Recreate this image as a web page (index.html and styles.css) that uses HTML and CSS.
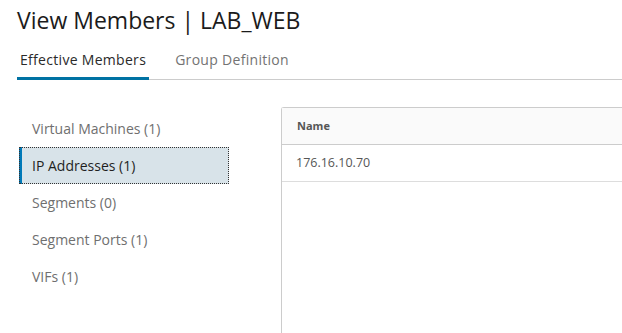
FILE: index.html
```html
<!DOCTYPE html>
<html>
<head>
<meta charset="utf-8">
<link rel="stylesheet" href="styles.css">
</head>
<body>
<div class="page">
  <h1 class="title">View Members | LAB_WEB</h1>
  <div class="tabs">
    <div class="tab active">Effective Members</div>
    <div class="tab">Group Definition</div>
  </div>
  <div class="content">
    <ul class="nav">
      <li class="nav-item">Virtual Machines (1)</li>
      <li class="nav-item selected">IP Addresses (1)</li>
      <li class="nav-item">Segments (0)</li>
      <li class="nav-item">Segment Ports (1)</li>
      <li class="nav-item">VIFs (1)</li>
    </ul>
    <div class="grid">
      <div class="grid-head">Name</div>
      <div class="grid-row">176.16.10.70</div>
    </div>
  </div>
</div>
</body>
</html>
```
FILE: styles.css
```css
html, body { margin: 0; padding: 0; background: #fff; }
body { font-family: "Open Sans", sans-serif; color: #313131; overflow: hidden; }
.page { padding: 0 0 0 17px; width: 605px; height: 333px; }
.title { margin: 0; padding-top: 4px; font-size: 23px; font-weight: 400; color: #1b1b1b; line-height: 32px; }
.tabs { display: flex; margin-top: 12px; border-bottom: 1px solid #cccccc; height: 32px; box-sizing: border-box; }
.tab { font-size: 14px; letter-spacing: 0.3px; color: #737373; padding: 0 3px; line-height: 24px; margin-right: 23px; }
.tab.active { color: #2a2a2a; border-bottom: 3px solid #0072a3; margin-bottom: -1px; padding-bottom: 2px; }
.content { display: flex; margin-top: 27px; }
.nav { list-style: none; margin: 0; padding: 0; width: 210px; flex: none; margin-top: 3px; margin-left: 2px; }
.nav-item { height: 37px; line-height: 37px; font-size: 14px; color: #6f6f6f; padding-left: 13px; box-sizing: border-box; }
.nav-item.selected { background: #d8e3e9; color: #1f1f1f; border-left: 3px solid #0079b8; padding-left: 10px; outline: 1px dotted #333; outline-offset: -1px; }
.grid { margin-left: 52px; flex: 1; border-left: 1px solid #cccccc; border-top: 1px solid #cccccc; border-top-left-radius: 3px; height: 230px; }
.grid-head { background: #fafafa; height: 36px; line-height: 36px; font-size: 11px; font-weight: 700; color: #565656; padding-left: 15px; border-bottom: 1px solid #cccccc; }
.grid-row { height: 36px; line-height: 36px; font-size: 12.5px; color: #565656; padding-left: 14px; border-bottom: 1px solid #dddddd; }
```
